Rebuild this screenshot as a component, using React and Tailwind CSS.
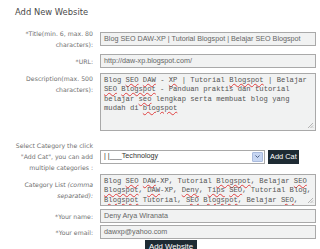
import React from 'react'

const label = "text-right text-[6.2px] leading-[11px] text-[#707070] font-['DejaVu_Sans',sans-serif]"
const field = "h-[14px] border border-[#a9a9a9] bg-[#f1f2f2] px-[3px] flex items-center text-[7.2px] text-[#666] font-['Liberation_Sans',sans-serif] whitespace-nowrap overflow-hidden"
const area = "relative border border-[#a9a9a9] bg-[#f1f2f2] pl-[3px] pt-[2px] text-[7.2px] leading-[9.3px] text-[#555] font-['Liberation_Mono',monospace] whitespace-nowrap overflow-hidden"

function W({ children }) {
  return <span className="underline decoration-wavy decoration-[#e04040] decoration-[0.5px] underline-offset-[1px]">{children}</span>
}

function Grip() {
  return (
    <svg className="absolute right-[1px] bottom-[1px]" width="7" height="7" viewBox="0 0 7 7">
      <path d="M6 1L1 6M6 3.5L3.5 6M6 5.5L5.5 6" stroke="#9a9a9a" strokeWidth="0.7" />
    </svg>
  )
}

function Row({ children, lbl, className = '' }) {
  return (
    <div className={"grid grid-cols-[93px_216px] gap-x-[7px] " + className}>
      <div className={label}>{lbl}</div>
      {children}
    </div>
  )
}

export default function App() {
  return (
    <div className="w-[320px] h-[249px] bg-white overflow-hidden">
      <div className="pl-[15px] pt-[6px] text-[8.4px] leading-[12px] text-[#4a4a4a] font-['DejaVu_Sans',sans-serif]">
        Add New Website
      </div>

      <Row className="mt-[10px] items-center" lbl={<>*Title(min. 6, max. 80<br />characters):</>}>
        <div className={field}>Blog SEO DAW-XP | Tutorial Blogspot | Belajar SEO Blogspot</div>
      </Row>

      <Row className="mt-[4px] items-center" lbl="*URL:">
        <div className={field}>http://daw-xp.blogspot.com/</div>
      </Row>

      <Row className="mt-[5px] items-start" lbl={<>Description(max. 500<br />characters):</>}>
        <div className={area + " h-[58px]"}>
          Blog <W>SEO</W> <W>DAW</W> - <W>XP</W> | Tutorial <W>Blogspot</W> | Belajar<br />
          <W>SEO</W> <W>Blogspot</W> - Panduan praktis dan tutorial<br />
          belajar <W>seo</W> lengkap serta membuat blog yang<br />
          mudah di <W>blogspot</W>
          <Grip />
        </div>
      </Row>

      <Row className="mt-[9px] items-center" lbl={<>Select Category the click<br />"Add Cat", you can add<br />multiple categories :</>}>
        <div className="flex items-center gap-[3px]">
          <div className="w-[165px] h-[14px] border border-[#a9a9a9] bg-white flex items-center justify-between pl-[3px] pr-[1px] text-[7.2px] text-[#333] font-['Liberation_Sans',sans-serif]">
            <span>| |___Technology</span>
            <div className="w-[11px] h-[10px] rounded-[1px] bg-[#c7d6f2] border border-[#aabbdd] flex items-center justify-center">
              <svg width="5" height="3" viewBox="0 0 5 3"><path d="M0.5 0.5L2.5 2.5L4.5 0.5" stroke="#4d6185" strokeWidth="1" fill="none" /></svg>
            </div>
          </div>
          <div className="h-[14px] px-[2px] bg-[#1e2b33] text-white text-[7.4px] flex items-center font-['Liberation_Sans',sans-serif]">Add Cat</div>
        </div>
      </Row>

      <Row className="mt-[1px] items-center" lbl={<>Category List <i>(comma<br />separated):</i></>}>
        <div className={area + " h-[32px]"}>
          Blog <W>SEO</W> <W>DAW</W>-XP, Tutorial <W>Blogspot</W>, Belajar <W>SEO</W><br />
          <W>Blogspot</W>, <W>DAW</W>-XP, <W>Deny</W>, <W>Tips</W> <W>SEO</W>, Tutorial Blog,<br />
          <W>Blogspot</W> Tutorial, <W>SEO</W> <W>Blogspot</W>, Belajar <W>SEO</W>,<br />
          Belajar <W>SEO</W> Mudah
          <Grip />
        </div>
      </Row>

      <Row className="mt-[3px] items-center" lbl="*Your name:">
        <div className={field}>Deny Arya Wiranata</div>
      </Row>

      <Row className="mt-[2px] items-center" lbl="*Your email:">
        <div className={field}>dawxp@yahoo.com</div>
      </Row>

      <div className="flex justify-center pl-[22px] mt-[1px]">
        <div className="h-[13px] px-[4px] bg-[#1e2b33] text-white text-[7.8px] flex items-center font-['Liberation_Sans',sans-serif]">Add Website</div>
      </div>
    </div>
  )
}
